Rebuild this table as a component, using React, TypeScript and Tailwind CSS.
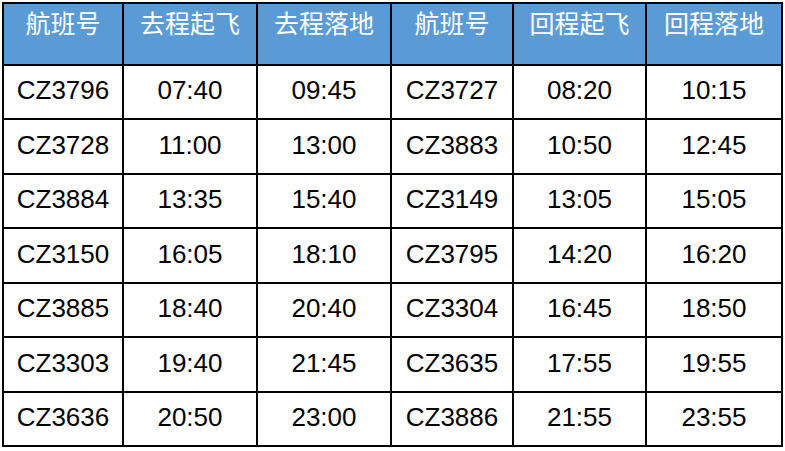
import React from 'react';

const headers = ['航班号', '去程起飞', '去程落地', '航班号', '回程起飞', '回程落地'];

const rows = [
  ['CZ3796', '07:40', '09:45', 'CZ3727', '08:20', '10:15'],
  ['CZ3728', '11:00', '13:00', 'CZ3883', '10:50', '12:45'],
  ['CZ3884', '13:35', '15:40', 'CZ3149', '13:05', '15:05'],
  ['CZ3150', '16:05', '18:10', 'CZ3795', '14:20', '16:20'],
  ['CZ3885', '18:40', '20:40', 'CZ3304', '16:45', '18:50'],
  ['CZ3303', '19:40', '21:45', 'CZ3635', '17:55', '19:55'],
  ['CZ3636', '20:50', '23:00', 'CZ3886', '21:55', '23:55'],
];

const rowHeights = ['h-[54px]', 'h-[55px]', 'h-[54px]', 'h-[55px]', 'h-[54px]', 'h-[55px]', 'h-[54px]'];

export default function App() {
  return (
    <div className="w-[785px] h-[451px] bg-white overflow-hidden">
      <div className="ml-[2px] mt-[2px] w-fit border-l-2 border-t-2 border-black grid grid-cols-[120px_134px_134px_122px_133px_136px]">
        {headers.map((h, i) => (
          <div
            key={'h' + i}
            className="h-[62px] bg-[#5b9bd5] border-r-2 border-b-2 border-black flex justify-center pt-[3px] text-white text-[25px] leading-[30px] font-['Noto_Sans_CJK_SC',sans-serif]"
          >
            {h}
          </div>
        ))}
        {rows.map((r, ri) =>
          r.map((c, ci) => (
            <div
              key={ri + '-' + ci}
              className={`${rowHeights[ri]} border-r-2 border-b-2 border-black flex items-center justify-center pb-[3px] text-black text-[26px] font-['Liberation_Sans',Arial,sans-serif]`}
            >
              {c}
            </div>
          ))
        )}
      </div>
    </div>
  );
}
